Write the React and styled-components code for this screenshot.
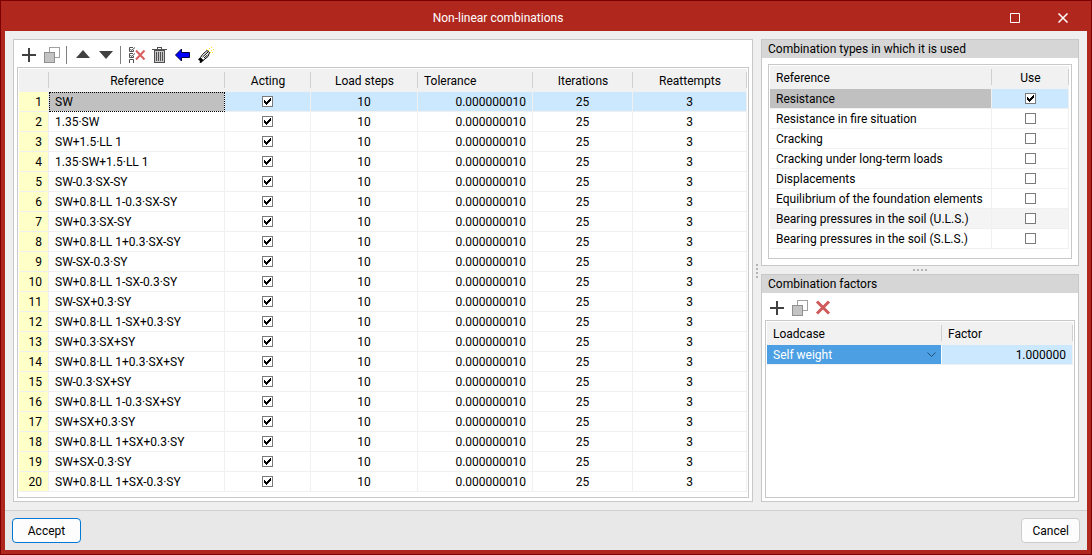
import React, { useState } from 'react';
import styled, { createGlobalStyle, css } from 'styled-components';

const LINE = '#f0f0f0';
const FRAME = '#c8c8c8';
const SELECTED = '#cce8ff';

const COMBINATIONS = [
  'SW',
  '1.35·SW',
  'SW+1.5·LL 1',
  '1.35·SW+1.5·LL 1',
  'SW-0.3·SX-SY',
  'SW+0.8·LL 1-0.3·SX-SY',
  'SW+0.3·SX-SY',
  'SW+0.8·LL 1+0.3·SX-SY',
  'SW-SX-0.3·SY',
  'SW+0.8·LL 1-SX-0.3·SY',
  'SW-SX+0.3·SY',
  'SW+0.8·LL 1-SX+0.3·SY',
  'SW+0.3·SX+SY',
  'SW+0.8·LL 1+0.3·SX+SY',
  'SW-0.3·SX+SY',
  'SW+0.8·LL 1-0.3·SX+SY',
  'SW+SX+0.3·SY',
  'SW+0.8·LL 1+SX+0.3·SY',
  'SW+SX-0.3·SY',
  'SW+0.8·LL 1+SX-0.3·SY',
];

const TYPES = [
  'Resistance',
  'Resistance in fire situation',
  'Cracking',
  'Cracking under long-term loads',
  'Displacements',
  'Equilibrium of the foundation elements',
  'Bearing pressures in the soil (U.L.S.)',
  'Bearing pressures in the soil (S.L.S.)',
];
const HOVERED_TYPE = 6;

const GlobalStyle = createGlobalStyle`
  * { box-sizing: border-box; }
  body {
    margin: 0;
    font: 12px/16px Roboto, 'Open Sans', sans-serif;
    color: #000;
  }
  button, select, input { font: inherit; color: inherit; margin: 0; }
`;

const Window = styled.div`
  display: flex;
  flex-direction: column;
  min-height: 100vh;
  border: 1px solid #7c0000;
  background: #b0281d;
`;

const TitleBar = styled.header`
  display: flex;
  align-items: center;
  height: 30px;
  padding: 4px 4px 0;
  color: #fff;

  h1 {
    flex: 1;
    margin: 0;
    font-size: 12px;
    font-weight: 400;
    text-align: center;
  }
`;

const WindowButtons = styled.div`
  display: flex;
`;

const WindowButton = styled.button`
  display: grid;
  place-items: center;
  width: 48px;
  height: 24px;
  padding: 0;
  border: 0;
  background: none;
`;

const Client = styled.main`
  display: flex;
  flex: 1;
  flex-direction: column;
  margin: 0 4px 4px;
  background: #efefef;
`;

const Body = styled.div`
  display: grid;
  flex: 1;
  grid-template-columns: minmax(0, 1fr) 8px 318px;
  padding: 8px;
`;

const Side = styled.div`
  display: flex;
  flex-direction: column;
`;

const Splitter = styled.div`
  display: flex;
  flex-direction: ${({ $vertical }) => ($vertical ? 'column' : 'row')};
  align-items: center;
  justify-content: center;
  gap: 2px;
  ${({ $vertical }) => !$vertical && css`height: 8px;`}

  i {
    width: 2px;
    height: 2px;
    background: #b4b4b4;
  }
`;

const Panel = styled.section`
  display: flex;
  flex: ${({ $grow }) => ($grow ? 1 : 'none')};
  flex-direction: column;
  border: 1px solid ${FRAME};
  background: #fff;
`;

const PanelTitle = styled.h2`
  height: 18px;
  margin: 0;
  padding: 0 6px;
  background: #d6d6d6;
  font-size: 12px;
  font-weight: 400;
  line-height: 18px;
`;

const Toolbar = styled.div`
  display: flex;
  align-items: center;
  height: 27px;
  padding: 2px 4px 0;
`;

const ToolButton = styled.button`
  display: grid;
  place-items: center;
  width: 23px;
  height: 23px;
  padding: 0;
  border: 0;
  background: none;
`;

const ToolSeparator = styled.span`
  width: 1px;
  height: 18px;
  margin: 0 5px 0 2px;
  background: #808080;
`;

const GridFrame = styled.div`
  flex: 1;
  margin: ${({ $inset }) => ($inset ? '6px' : '0 3px 3px')};
  padding: ${({ $inset }) => ($inset ? '1px 2px 9px 1px' : '1px 1px 5px')};
  border: 1px solid ${FRAME};
`;

const Table = styled.table`
  width: 100%;
  table-layout: fixed;
  border-collapse: separate;
  border-spacing: 0;
`;

const Col = styled.col`
  width: ${({ $width }) => ($width ? `${$width}px` : 'auto')};
`;

const HeadCell = styled.th`
  height: 23px;
  padding: 0 6px;
  background: linear-gradient(#d0d0d0, #d0d0d0) right 3px / 1px 16px no-repeat #f1f1f1;
  font-weight: 400;
  text-align: ${({ $align }) => $align || 'center'};
  white-space: nowrap;
`;

const Row = styled.tr`
  background: ${({ $selected, $hovered }) =>
    $selected ? SELECTED : $hovered ? '#f4f4f4' : '#fff'};
`;

const Cell = styled.td`
  height: 20px;
  padding: 0 6px;
  border-right: 1px solid ${LINE};
  border-bottom: 1px solid ${LINE};
  text-align: ${({ $align }) => $align || 'left'};
  white-space: nowrap;
  ${({ $current }) =>
    $current &&
    css`
      background: #c0c0c0;
      background-clip: padding-box;
    `}
  ${({ $focused }) =>
    $focused &&
    css`
      outline: 1px dotted #000;
      outline-offset: -1px;
    `}
`;

const NumberCell = styled.th`
  height: 20px;
  padding: 0 6px;
  border-right: 1px solid ${LINE};
  border-bottom: 1px solid ${LINE};
  background: #ffffc8;
  font-weight: 400;
  text-align: right;
`;

const CheckWrap = styled.span`
  display: grid;
  justify-content: center;

  > * { grid-area: 1 / 1; }
  svg { pointer-events: none; }
`;

const CheckInput = styled.input`
  width: 11px;
  height: 11px;
  appearance: none;
  border: 1px solid #7a7a7a;
  background: #fff;
`;

const SelectCell = styled.td`
  padding: 0;
  border-right: 1px solid #fff;
  border-bottom: 1px solid ${LINE};
`;

const SelectWrap = styled.div`
  display: grid;
  align-items: center;
  background: #4c9fe3;
  color: #fff;

  > * { grid-area: 1 / 1; }
  svg {
    justify-self: end;
    margin-right: 5px;
    pointer-events: none;
  }
`;

const Select = styled.select`
  width: 100%;
  height: 19px;
  padding: 0 6px;
  appearance: none;
  border: 0;
  background: none;
`;

const Footer = styled.footer`
  display: flex;
  align-items: center;
  justify-content: space-between;
  height: 40px;
  padding: 0 7px;
  border-top: 1px solid #cfcfcf;
  background: #e8e8e8;
`;

const DialogButton = styled.button`
  min-width: ${({ $primary }) => ($primary ? 69 : 58)}px;
  height: 25px;
  padding: 0 10px;
  border: 1px solid ${({ $primary }) => ($primary ? '#0078d4' : '#cccccc')};
  border-radius: 4px;
  background: #fdfdfd;
`;

function PlusIcon() {
  return (
    <svg width="17" height="17" shapeRendering="crispEdges">
      <path d="M1 8h14v2H1zM7 2h2v14H7z" fill="#404040" />
    </svg>
  );
}

function CopyIcon() {
  return (
    <svg width="17" height="17" shapeRendering="crispEdges">
      <path d="M5.500 1.500h10v10h-10z" fill="#fff" stroke="#a0a0a0" />
      <path d="M.500 6.500h10v10h-10z" fill="#c3c3c3" stroke="#909090" />
    </svg>
  );
}

function TriangleIcon({ down }) {
  return (
    <svg width="17" height="17">
      <path d={down ? 'M1 5h14l-7 8z' : 'M1 12h14l-7-8z'} fill="#404040" />
    </svg>
  );
}

function ChecklistIcon() {
  return (
    <svg width="17" height="17">
      <g fill="none" stroke="#505050">
        <path d="M4 1.500H.500v4h4V4M4 7.500H.500v4h4V10M.500 17v-3.500h4V17" />
        <path d="M1.500 3l1 1.500L6 1.500M1.500 9l1 1.500L6 7.500" />
      </g>
      <path d="M7 4.500l8.500 9M15.500 4.500l-8.500 9" stroke="#d9605f" strokeWidth="2" />
    </svg>
  );
}

function TrashIcon() {
  return (
    <svg width="17" height="17" shapeRendering="crispEdges">
      <path d="M2.500 4.500h10v12h-10z" fill="#c8c8c8" stroke="#505050" />
      <path d="M4 6h1v9H4zM6 6h1v9H6zM8 6h1v9H8zM10 6h1v9h-1zM0 3h15v1H0zM5 1h5v2H9V2H6v1H5z" fill="#505050" />
    </svg>
  );
}

function ArrowIcon() {
  return (
    <svg width="17" height="17">
      <path d="M.500 9l6-6v3.500h8v5h-8V15z" fill="#0000ff" stroke="#000040" />
    </svg>
  );
}

function TorchIcon() {
  return (
    <svg width="17" height="17">
      <path d="M2.500 11.500l2-3L9 4.500l2.500 2-1.500 4-5 4z" fill="#fff" stroke="#000" />
      <path d="M4.500 11L10 6M6 12l3.500-3" stroke="#000" />
      <path d="M0 13.500l2-2 3.500 3L3 17l-1.500-.500.500-1.500z" fill="#000" />
      <path d="M8 3h1v1H8zM11 2h1v1h-1zM13 1h1v1h-1zM13 4h1v1h-1zM14 6h1v1h-1zM12 6h1v1h-1zM15 3h1v1h-1zM10 4h1v1h-1z" fill="#ffe628" />
    </svg>
  );
}

function CrossIcon() {
  return (
    <svg width="17" height="17">
      <path d="M2 2.500l12 12M14 2.500l-12 12" stroke="#d05a5a" strokeWidth="3" />
    </svg>
  );
}

function Tool({ label, children }) {
  return (
    <ToolButton type="button" aria-label={label}>
      {children}
    </ToolButton>
  );
}

function Check({ label, checked, onChange }) {
  return (
    <CheckWrap>
      <CheckInput type="checkbox" aria-label={label} checked={checked} onChange={onChange} />
      {checked && (
        <svg width="11" height="11" shapeRendering="crispEdges">
          <path
            d="M2 4h1v1h1v1h1V5h1V4h1V3h1V2h1v3H8v1H7v1H6v1H5v1H4V8H3V7H2z"
            fill="#000"
          />
        </svg>
      )}
    </CheckWrap>
  );
}

function Dots({ vertical }) {
  return (
    <Splitter $vertical={vertical}>
      <i />
      <i />
      <i />
      <i />
    </Splitter>
  );
}

function toggle(set, index) {
  const next = new Set(set);
  if (!next.delete(index)) next.add(index);
  return next;
}

function CombinationsTable() {
  const [acting, setActing] = useState(new Set(COMBINATIONS.keys()));

  return (
    <Table>
      <colgroup>
        <Col $width={30} />
        <Col />
        <Col $width={86} />
        <Col $width={107} />
        <Col $width={115} />
        <Col $width={100} />
        <Col $width={114} />
      </colgroup>
      <thead>
        <tr>
          <HeadCell />
          <HeadCell>Reference</HeadCell>
          <HeadCell>Acting</HeadCell>
          <HeadCell>Load steps</HeadCell>
          <HeadCell $align="left">Tolerance</HeadCell>
          <HeadCell>Iterations</HeadCell>
          <HeadCell>Reattempts</HeadCell>
        </tr>
      </thead>
      <tbody>
        {COMBINATIONS.map((name, index) => (
          <Row key={name} $selected={index === 0}>
            <NumberCell scope="row">{index + 1}</NumberCell>
            <Cell $current={index === 0} $focused={index === 0}>{name}</Cell>
            <Cell>
              <Check
                label={`Acting ${name}`}
                checked={acting.has(index)}
                onChange={() => setActing((previous) => toggle(previous, index))}
              />
            </Cell>
            <Cell $align="center">10</Cell>
            <Cell $align="right">0.000000010</Cell>
            <Cell $align="center">25</Cell>
            <Cell $align="center">3</Cell>
          </Row>
        ))}
      </tbody>
    </Table>
  );
}

function TypesTable() {
  const [used, setUsed] = useState(new Set([0]));

  return (
    <Table>
      <colgroup>
        <Col />
        <Col $width={77} />
      </colgroup>
      <thead>
        <tr>
          <HeadCell $align="left">Reference</HeadCell>
          <HeadCell>Use</HeadCell>
        </tr>
      </thead>
      <tbody>
        {TYPES.map((name, index) => (
          <Row key={name} $selected={index === 0} $hovered={index === HOVERED_TYPE}>
            <Cell $current={index === 0}>{name}</Cell>
            <Cell>
              <Check
                label={`Use ${name}`}
                checked={used.has(index)}
                onChange={() => setUsed((previous) => toggle(previous, index))}
              />
            </Cell>
          </Row>
        ))}
      </tbody>
    </Table>
  );
}

function FactorsTable() {
  return (
    <Table>
      <colgroup>
        <Col />
        <Col $width={131} />
      </colgroup>
      <thead>
        <tr>
          <HeadCell $align="left">Loadcase</HeadCell>
          <HeadCell $align="left">Factor</HeadCell>
        </tr>
      </thead>
      <tbody>
        <Row $selected>
          <SelectCell>
            <SelectWrap>
              <Select aria-label="Loadcase">
                <option>Self weight</option>
              </Select>
              <svg width="9" height="5">
                <path d="M.500.500l4 4 4-4" fill="none" stroke="#1f4f78" />
              </svg>
            </SelectWrap>
          </SelectCell>
          <Cell $align="right">1.000000</Cell>
        </Row>
      </tbody>
    </Table>
  );
}

export default function App() {
  return (
    <Window>
      <GlobalStyle />
      <TitleBar>
        <h1>Non-linear combinations</h1>
        <WindowButtons>
          <WindowButton type="button" aria-label="Maximize">
            <svg width="10" height="10">
              <path d="M.500.500h9v9h-9z" fill="none" stroke="#fff" />
            </svg>
          </WindowButton>
          <WindowButton type="button" aria-label="Close">
            <svg width="10" height="10">
              <path d="M.500.500l9 9M9.500.500l-9 9" stroke="#fff" strokeWidth="1.500" />
            </svg>
          </WindowButton>
        </WindowButtons>
      </TitleBar>
      <Client>
        <Body>
          <Panel>
            <Toolbar>
              <Tool label="Add"><PlusIcon /></Tool>
              <Tool label="Copy"><CopyIcon /></Tool>
              <ToolSeparator />
              <Tool label="Move up"><TriangleIcon /></Tool>
              <Tool label="Move down"><TriangleIcon down /></Tool>
              <ToolSeparator />
              <Tool label="Delete selected"><ChecklistIcon /></Tool>
              <Tool label="Delete all"><TrashIcon /></Tool>
              <Tool label="Import"><ArrowIcon /></Tool>
              <Tool label="Generate"><TorchIcon /></Tool>
            </Toolbar>
            <GridFrame>
              <CombinationsTable />
            </GridFrame>
          </Panel>
          <Dots vertical />
          <Side>
            <Panel>
              <PanelTitle>Combination types in which it is used</PanelTitle>
              <GridFrame $inset>
                <TypesTable />
              </GridFrame>
            </Panel>
            <Dots />
            <Panel $grow>
              <PanelTitle>Combination factors</PanelTitle>
              <Toolbar>
                <Tool label="Add factor"><PlusIcon /></Tool>
                <Tool label="Copy factor"><CopyIcon /></Tool>
                <Tool label="Delete factor"><CrossIcon /></Tool>
              </Toolbar>
              <GridFrame>
                <FactorsTable />
              </GridFrame>
            </Panel>
          </Side>
        </Body>
        <Footer>
          <DialogButton type="button" $primary>Accept</DialogButton>
          <DialogButton type="button">Cancel</DialogButton>
        </Footer>
      </Client>
    </Window>
  );
}
